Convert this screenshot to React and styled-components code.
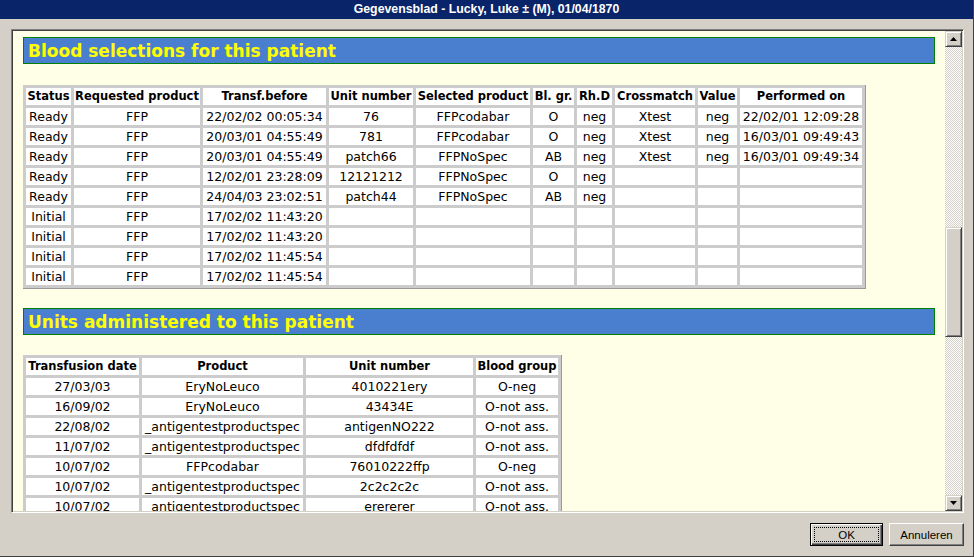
import React from "react";
import styled, { createGlobalStyle } from "styled-components";

const GlobalStyle = createGlobalStyle`
  html, body {
    margin: 0;
    padding: 0;
    background: #d4d0c8;
    overflow: hidden;
  }
`;

const Window = styled.div`
  width: 974px;
  height: 557px;
  display: flex;
  flex-direction: column;
  background: #d4d0c8;
  box-sizing: border-box;
  font-family: "DejaVu Sans", Verdana, sans-serif;
`;

const TitleBar = styled.div`
  height: 19px;
  flex: none;
  background: #0a246a;
  color: #ffffff;
  font: bold 12.3px "Liberation Sans", Arial, sans-serif;
  line-height: 19px;
  text-align: center;
  border-right: 1px solid #404040;
`;

const Body = styled.div`
  flex: 1;
  display: flex;
  flex-direction: column;
  padding: 10px 9px 0 11px;
  border-bottom: 1px solid #404040;
  border-right: 1px solid #404040;
`;

const Frame = styled.div`
  height: 484px;
  box-sizing: border-box;
  display: flex;
  border-top: 1px solid #808080;
  border-left: 1px solid #808080;
  border-right: 1px solid #ffffff;
  border-bottom: 1px solid #ffffff;
  box-shadow: inset 1px 1px #404040, inset -1px -1px #d4d0c8;
  padding: 1px;
`;

const Content = styled.div`
  flex: 1;
  background: #ffffe8;
  overflow: hidden;
  padding: 6px 10px 0;
`;

const Banner = styled.div`
  height: 25px;
  border: 1px solid #008000;
  background: #4a7ecf;
  color: #ffff00;
  font: bold 17px "DejaVu Sans", Verdana, sans-serif;
  line-height: 26px;
  padding-left: 4px;
  white-space: nowrap;
`;

const Table = styled.table`
  border-collapse: separate;
  border-spacing: 3px;
  background: #cccccc;
  border-right: 1px solid #999999;
  border-bottom: 1px solid #999999;
  margin: ${(p) => p.$top}px 0 19px;
`;

const Th = styled.th`
  width: ${(p) => p.$w}px;
  height: 17px;
  padding: 0;
  background: #ffffff;
  font: bold 11.5px "DejaVu Sans", Verdana, sans-serif;
  line-height: 17px;
  text-align: center;
  white-space: nowrap;
  color: #000;
`;

const Td = styled.td`
  height: 17px;
  padding: 0;
  background: #ffffff;
  font: 12.5px "DejaVu Sans", Verdana, sans-serif;
  line-height: 17px;
  text-align: center;
  white-space: nowrap;
  color: #000;
`;

const Scrollbar = styled.div`
  width: 17px;
  flex: none;
  display: flex;
  flex-direction: column;
`;

const Bevel = styled.div`
  box-sizing: border-box;
  background: #d4d0c8;
  border-top: 1px solid #d4d0c8;
  border-left: 1px solid #d4d0c8;
  border-right: 1px solid #404040;
  border-bottom: 1px solid #404040;
  box-shadow: inset 1px 1px #ffffff, inset -1px -1px #808080;
`;

const ArrowButton = styled(Bevel)`
  height: 16px;
  flex: none;
  display: flex;
  align-items: center;
  justify-content: center;
`;

const Track = styled.div`
  flex: ${(p) => (p.$grow ? 1 : "none")};
  height: ${(p) => (p.$grow ? "auto" : `${p.$h}px`)};
  background: repeating-conic-gradient(#ffffff 0 25%, #d4d0c8 0 50%) 0 0 / 2px 2px;
`;

const Thumb = styled(Bevel)`
  height: 110px;
  flex: none;
`;

const ButtonRow = styled.div`
  display: flex;
  justify-content: flex-end;
  gap: 6px;
  margin-top: 10px;
`;

const DialogButton = styled.button`
  width: ${(p) => p.$w}px;
  height: 23px;
  padding: 0;
  box-sizing: border-box;
  background: #d4d0c8;
  font: 11.5px "Liberation Sans", Arial, sans-serif;
  color: #000;
  border-top: 1px solid #ffffff;
  border-left: 1px solid #ffffff;
  border-right: 1px solid #404040;
  border-bottom: 1px solid #404040;
  box-shadow: inset -1px -1px #808080;
  ${(p) =>
    p.$default &&
    `
    border: 1px solid #000000;
    box-shadow: inset 1px 1px #ffffff, inset -1px -1px #404040, inset -2px -2px #808080;
    outline: 1px dotted #000000;
    outline-offset: -5px;
  `}
`;

const Arrow = ({ up }) => (
  <svg width="7" height="4" viewBox="0 0 7 4">
    <path d={up ? "M3.5 0 L7 4 L0 4 Z" : "M0 0 L7 0 L3.5 4 Z"} fill="#000" />
  </svg>
);

const selCols = [
  ["Status", 45],
  ["Requested product", 126],
  ["Transf.before", 123],
  ["Unit number", 84],
  ["Selected product", 114],
  ["Bl. gr.", 41],
  ["Rh.D", 35],
  ["Crossmatch", 80],
  ["Value", 39],
  ["Performed on", 122],
];

const selections = [
  ["Ready", "FFP", "22/02/02 00:05:34", "76", "FFPcodabar", "O", "neg", "Xtest", "neg", "22/02/01 12:09:28"],
  ["Ready", "FFP", "20/03/01 04:55:49", "781", "FFPcodabar", "O", "neg", "Xtest", "neg", "16/03/01 09:49:43"],
  ["Ready", "FFP", "20/03/01 04:55:49", "patch66", "FFPNoSpec", "AB", "neg", "Xtest", "neg", "16/03/01 09:49:34"],
  ["Ready", "FFP", "12/02/01 23:28:09", "12121212", "FFPNoSpec", "O", "neg", "", "", ""],
  ["Ready", "FFP", "24/04/03 23:02:51", "patch44", "FFPNoSpec", "AB", "neg", "", "", ""],
  ["Initial", "FFP", "17/02/02 11:43:20", "", "", "", "", "", "", ""],
  ["Initial", "FFP", "17/02/02 11:43:20", "", "", "", "", "", "", ""],
  ["Initial", "FFP", "17/02/02 11:45:54", "", "", "", "", "", "", ""],
  ["Initial", "FFP", "17/02/02 11:45:54", "", "", "", "", "", "", ""],
];

const unitCols = [
  ["Transfusion date", 113],
  ["Product", 161],
  ["Unit number", 167],
  ["Blood group", 82],
];

const units = [
  ["27/03/03", "EryNoLeuco", "4010221ery", "O-neg"],
  ["16/09/02", "EryNoLeuco", "43434E", "O-not ass."],
  ["22/08/02", "_antigentestproductspec", "antigenNO222", "O-not ass."],
  ["11/07/02", "_antigentestproductspec", "dfdfdfdf", "O-not ass."],
  ["10/07/02", "FFPcodabar", "76010222ffp", "O-neg"],
  ["10/07/02", "_antigentestproductspec", "2c2c2c2c", "O-not ass."],
  ["10/07/02", "_antigentestproductspec", "erererer", "O-not ass."],
];

const DataTable = ({ cols, rows, top }) => (
  <Table $top={top}>
    <thead>
      <tr>
        {cols.map(([label, w]) => (
          <Th key={label} $w={w}>
            {label}
          </Th>
        ))}
      </tr>
    </thead>
    <tbody>
      {rows.map((row, i) => (
        <tr key={i}>
          {row.map((cell, j) => (
            <Td key={j}>{cell}</Td>
          ))}
        </tr>
      ))}
    </tbody>
  </Table>
);

export default function App() {
  return (
    <>
      <GlobalStyle />
      <Window>
        <TitleBar>Gegevensblad - Lucky, Luke ± (M), 01/04/1870</TitleBar>
        <Body>
          <Frame>
            <Content>
              <Banner>Blood selections for this patient</Banner>
              <DataTable cols={selCols} rows={selections} top={21} />
              <Banner>Units administered to this patient</Banner>
              <DataTable cols={unitCols} rows={units} top={20} />
            </Content>
            <Scrollbar>
              <ArrowButton>
                <Arrow up />
              </ArrowButton>
              <Track $h={180} />
              <Thumb />
              <Track $grow />
              <ArrowButton>
                <Arrow />
              </ArrowButton>
            </Scrollbar>
          </Frame>
          <ButtonRow>
            <DialogButton $w={73} $default>
              OK
            </DialogButton>
            <DialogButton $w={75}>Annuleren</DialogButton>
          </ButtonRow>
        </Body>
      </Window>
    </>
  );
}
